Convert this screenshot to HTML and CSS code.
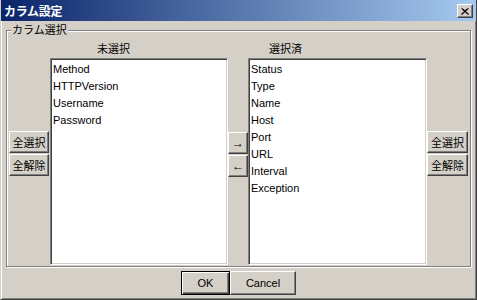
FILE: index.html
```html
<!DOCTYPE html>
<html lang="ja">
<head>
    <meta charset="UTF-8">
    <title>カラム設定</title>
    <link rel="stylesheet" href="styles.css">
</head>
<body>
    <div class="window">
        <div class="titlebar">
            <span class="title">カラム設定</span>
            <button class="close-btn"><svg width="8" height="7" viewBox="0 0 8 7"><path d="M0.5 0.5 L7 6.5 M1.5 0.5 L8 6.5 M6.5 0.5 L0 6.5 M7.5 0.5 L1 6.5" stroke="#000" stroke-width="1"/></svg></button>
        </div>
        <div class="body">
            <div class="group">
                <div class="group-title">カラム選択</div>
                <div class="group-body">
                    <div class="side">
                        <button class="btn side-btn">全選択</button>
                        <button class="btn side-btn">全解除</button>
                    </div>
                    <div class="list-col left-col">
                        <div class="list-label">未選択</div>
                        <div class="list">
                            <div class="item">Method</div>
                            <div class="item">HTTPVersion</div>
                            <div class="item">Username</div>
                            <div class="item">Password</div>
                        </div>
                    </div>
                    <div class="mid">
                        <button class="btn arrow-btn">→</button>
                        <button class="btn arrow-btn">←</button>
                    </div>
                    <div class="list-col right-col">
                        <div class="list-label">選択済</div>
                        <div class="list">
                            <div class="item">Status</div>
                            <div class="item">Type</div>
                            <div class="item">Name</div>
                            <div class="item">Host</div>
                            <div class="item">Port</div>
                            <div class="item">URL</div>
                            <div class="item">Interval</div>
                            <div class="item">Exception</div>
                        </div>
                    </div>
                    <div class="side right-side">
                        <button class="btn side-btn">全選択</button>
                        <button class="btn side-btn">全解除</button>
                    </div>
                </div>
            </div>
            <div class="footer">
                <button class="btn default-btn ok-btn">OK</button>
                <button class="btn cancel-btn">Cancel</button>
            </div>
        </div>
    </div>
</body>
</html>
```

FILE: styles.css
```css
body { margin: 0; background: #d4d0c8; font-family: "Liberation Sans", "Noto Sans CJK JP", sans-serif; font-size: 11px; color: #000; }
.window { width: 477px; height: 300px; box-sizing: border-box; display: flex; flex-direction: column; background: #d4d0c8; border: 1px solid; border-top: 0; border-color: #d4d0c8 #404040 #404040 #d4d0c8; box-shadow: inset 1px 0 #fff, inset -1px -1px #808080; }
.titlebar { height: 21px; flex: none; display: flex; align-items: center; justify-content: space-between; padding: 0 3px 0 3px; background: linear-gradient(to right, #0a246a, #a6caf0); }
.title { color: #fff; font-weight: bold; font-size: 12px; letter-spacing: -0.3px; }
.close-btn { width: 16px; height: 14px; padding: 0; margin-top: 1px; display: flex; align-items: center; justify-content: center; background: #d4d0c8; border: 1px solid; border-color: #fff #404040 #404040 #fff; box-shadow: inset -1px -1px #808080; }

.body { flex: 1; display: flex; flex-direction: column; padding: 9px 5px 0 5px; }
.group { position: relative; height: 237px; box-sizing: border-box; border: 1px solid #808080; box-shadow: 1px 1px #fff, inset 1px 1px #fff; }
.group-title { position: absolute; top: -8px; left: 4px; padding: 0 1px; background: #d4d0c8; line-height: 14px; }
.group-body { height: 100%; box-sizing: border-box; display: flex; padding: 12px 0 0 2px; }

.btn { font-family: inherit; font-size: 11px; color: #000; background: #d4d0c8; padding: 0; border: 1px solid; border-color: #fff #404040 #404040 #fff; box-shadow: inset -1px -1px #808080; }
.side { width: 40px; margin-right: 1px; display: flex; flex-direction: column; gap: 1px; padding-top: 88px; }
.right-side { width: 41px; margin-right: 0; }
.side-btn { height: 22px; }
.mid { width: 20px; display: flex; flex-direction: column; gap: 1px; padding-top: 89px; }
.arrow-btn { height: 22px; font-size: 12px; }

.list-col { display: flex; flex-direction: column; }
.left-col { width: 178px; }
.right-col { width: 179px; }
.list-label { height: 15px; line-height: 13px; }
.left-col .list-label { padding-left: 47px; }
.right-col .list-label { padding-left: 21px; }
.list { height: 207px; box-sizing: border-box; background: #fff; border: 1px solid; border-color: #808080 #fff #fff #808080; box-shadow: inset 1px 1px #404040, inset -1px -1px #d4d0c8; padding: 2px 0 0 2px; }
.item { height: 17px; line-height: 17px; white-space: nowrap; }

.footer { display: flex; justify-content: center; padding-top: 4px; }
.footer .btn { height: 24px; }
.ok-btn { width: 49px; }
.cancel-btn { width: 66px; }
.default-btn { border-color: #000; box-shadow: inset 1px 1px #fff, inset -1px -1px #404040, inset -2px -2px #808080; }
```
